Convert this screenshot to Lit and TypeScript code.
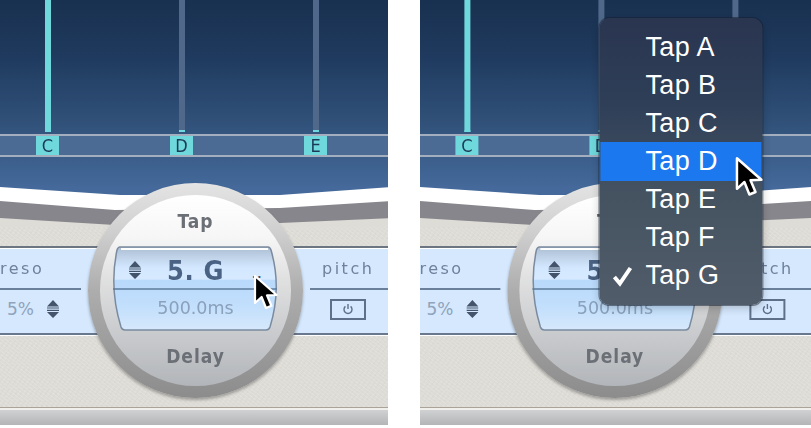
import { LitElement, html, css } from "lit";
import { customElement, property } from "lit/decorators.js";

const TAPS = [
  { id: "C", x: 36, on: true },
  { id: "D", x: 170, on: false },
  { id: "E", x: 304, on: false },
];
const MENU = ["A", "B", "C", "D", "E", "F", "G"];

const stepper = (cls: string) => html`<svg class=${cls} viewBox="0 0 12 18" width="12" height="18">
  <path d="M6 0 L12 6.4 H0 Z M0 7.4 H12 V8.6 H0 Z M0 9.8 H12 V11 H0 Z M0 12 H12 L6 18 Z" fill="#44546a"/>
</svg>`;

const arrow = (cls: string) => html`<svg class=${cls} viewBox="0 0 28 38">
  <path d="M3 2 L3 29 L9.6 23 L14 34 L19.4 31.8 L15 21.4 L24.6 21 Z" fill="#000" stroke="#fff" stroke-width="2.2" stroke-linejoin="round"/>
</svg>`;

@customElement("delay-panel")
class DelayPanel extends LitElement {
  @property({ type: Boolean, reflect: true }) menu = false;
  static styles = css`
    :host { display: block; position: relative; height: 425px; overflow: hidden; font-family: "DejaVu Sans", sans-serif; }
    .inner { position: relative; width: 392px; height: 425px; display: flex; flex-direction: column; }
    :host([menu]) .inner { transform: translateX(-0.6px); }
    .sky { height: 187px; flex: none; display: flex; flex-direction: column;
      background: linear-gradient(#193150 0%, #1f3a5e 30%, #33547d 70%, #44699a 100%); }
    .track { height: 134px; flex: none; position: relative; }
    .bar { position: absolute; top: 0; bottom: 2px; width: 6px; background: #50698a; }
    .bar::after { content: ""; position: absolute; left: 0; right: 0; bottom: 0; height: 2px; background: #6fd8dc; }
    .bar.on { background: #6fd8dc; }
    .band { height: 19px; flex: none; position: relative; background: #4b6b94;
      border-top: 2px solid #a3afbf; border-bottom: 2px solid #a3afbf; }
    .tag { position: absolute; top: 0; width: 23px; height: 19px; background: #6fd8dc; color: #1b3a58;
      font: 18px/19px "DejaVu Sans Condensed", "DejaVu Sans", sans-serif; text-align: center; filter: blur(.25px); }
    .wedge { display: block; flex: none; width: 392px; height: 40px; }
    .cream { background-color: #dedcd6;
      background-image: repeating-linear-gradient(37deg, rgba(255,255,255,.12) 0 1px, transparent 1px 3px),
        repeating-linear-gradient(-53deg, rgba(120,115,105,.035) 0 1px, transparent 1px 4px); }
    .upper { height: 19px; flex: none; }
    .strip { height: 85px; flex: none; display: flex; justify-content: space-between; background: #d5e8fe;
      border-top: 2px solid #6c7582; border-bottom: 2px solid #69788c; box-shadow: inset 0 1px #fff; }
    .lower { height: 71px; flex: none; border-top: 1px solid #fff; }
    .foot { height: 18px; flex: none; border-top: 1px solid #a9a399; box-sizing: border-box; padding-top: 2px; background: #f0efec; }
    .foot div { height: 15px; background: linear-gradient(#cfd1d3, #b3b5b7); }
    .cell { display: flex; flex-direction: column; color: #6f819c; }
    .cell.l { width: 81px; } .cell.r { width: 82px; }
    .name { height: 42px; flex: none; box-sizing: border-box; padding-top: 11px; font-size: 16px; line-height: 20px; letter-spacing: 2.5px; border-bottom: 2px solid #6a7f9a; filter: blur(.2px); }
    .l .name { text-align: right; padding-right: 37px; }
    .r .name { padding-left: 12px; }
    .val { flex: 1; display: flex; align-items: center; padding-bottom: 5px; }
    .l .val { padding-left: 7px; gap: 13px; font-size: 17px; color: #8fa3bb; }
    .pow { margin-left: 20px; width: 36px; height: 21px; box-sizing: border-box; border: 2px solid #5e7089; display: flex; align-items: center; justify-content: center; }

    .dial { position: absolute; left: 88px; top: 183px; width: 215px; height: 215px; border-radius: 50%; box-sizing: border-box; padding: 12px;
      background: linear-gradient(#e4e4e4 0%, #d0d0d0 22%, #adadad 50%, #8c8c8c 100%);
      box-shadow: 0 2px 3px rgba(60,60,60,.4); }
    .face { height: 191px; border-radius: 50%; display: flex; flex-direction: column; align-items: center;
      background: linear-gradient(#fff 0%, #f6f6f6 22%, #e2e2e2 42%, #c6c8cb 76%, #b2b5b9 100%); }
    .cap { height: 24px; flex: none; font: bold 19px/24px "DejaVu Sans Condensed", "DejaVu Sans", sans-serif; letter-spacing: 1px; color: #6b6f76; filter: blur(.35px); }
    .cap.t { margin-top: 14px; }
    .cap.b { margin-top: 13px; }
    .window { position: relative; flex: none; margin-top: 13px; width: 165px; height: 85px; display: flex; flex-direction: column; }
    .window > svg.bg { position: absolute; inset: 0; overflow: visible; }
    .row1 { position: relative; height: 43px; flex: none; display: grid; grid-template-columns: 54px 54px 1fr; align-items: center; }
    .row1 .step { margin-left: 16px; margin-top: 4px; }
    .num { font: bold 27px/30px "DejaVu Sans Condensed", "DejaVu Sans", sans-serif; letter-spacing: .6px; color: #4a6283; white-space: pre; margin-top: 7px; filter: blur(.3px); }
    .dots { margin-left: 31px; margin-top: 14px; color: #3f5068; font: bold 11px/10px "DejaVu Sans", sans-serif; letter-spacing: 1px; }
    .row2 { position: relative; flex: 1; text-align: center; font-size: 17.5px; line-height: 38px; color: #8aa0bb; filter: blur(.2px); }
    .cursor { position: absolute; left: 252px; top: 274px; width: 28px; height: 38px; }
    .menu { position: absolute; left: 180px; top: 18px; width: 163px; height: 287px; box-sizing: border-box; padding: 10px 0 0; border-radius: 10px;
      background: linear-gradient(#2a3550 0%, #2f3f58 30%, #455361 62%, #515c6a 100%);
      box-shadow: 0 0 0 1px rgba(20,30,45,.5), 0 3px 8px rgba(0,0,0,.2); color: #fff;
      font: 27px/39px "Liberation Sans", sans-serif; }
    .item { height: 38px; padding-left: 46px; position: relative; letter-spacing: .4px; }
    .item.hot { background: #1c78ef; margin: 0 1px -1px; height: 39px; padding-left: 45px; }
    .check { position: absolute; left: 12px; top: 9px; }
    .cursor.m { left: 314px; top: 156px; width: 32px; height: 43px; }
  `;
  render() {
    return html`<div class="inner">
      <div class="sky">
        <div class="track">${TAPS.map((t) => html`<div class="bar ${t.on ? "on" : ""}" style="left:${t.x + 9}px"></div>`)}</div>
        <div class="band">${TAPS.map((t) => html`<div class="tag" style="left:${t.x}px">${t.id}</div>`)}</div>
      </div>
      <svg class="wedge" viewBox="0 0 392 40" preserveAspectRatio="none">
        <rect width="392" height="40" fill="#44699a"/>
        <path d="M0 0 L120 8 L280 8 L392 0 V40 H0 Z" fill="#fff"/>
        <path d="M0 14 L115 23 L280 21 L392 14 V40 H0 Z" fill="#87868c"/>
        <path d="M0 31 L115 38 L280 36 L392 31 V40 H0 Z" fill="#dedcd6"/>
      </svg>
      <div class="upper cream"></div>
      <div class="strip">
        <div class="cell l"><div class="name">reso</div><div class="val"><span>5%</span>${stepper("")}</div></div>
        <div class="cell r"><div class="name">pitch</div><div class="val">
          <div class="pow"><svg viewBox="0 0 12 12" width="12" height="12"><path d="M3.4 3.4 A4 4 0 1 0 8.6 3.4 M6 1 V6" fill="none" stroke="#5e7089" stroke-width="1.4"/></svg></div>
        </div></div>
      </div>
      <div class="lower cream"></div>
      <div class="foot"><div></div></div>

      <div class="dial"><div class="face">
        <div class="cap t">Tap</div>
        <div class="window">
          <svg class="bg" viewBox="0 0 165 85" width="165" height="85">
            <defs>
              <linearGradient id="w" x1="0" y1="0" x2="0" y2="1">
                <stop offset="0" stop-color="#adbed2"/><stop offset=".25" stop-color="#d3e8ff"/>
                <stop offset=".39" stop-color="#d6e9ff"/><stop offset=".395" stop-color="#b9d9fb"/>
                <stop offset=".72" stop-color="#c2dffc"/><stop offset="1" stop-color="#d6e8fb"/>
              </linearGradient>
            </defs>
            <path d="M7 1 H155 Q157 1 158 4 Q169 42 157 81 Q156 84 153 84 H12 Q9 84 8 81 Q-4 42 4 4 Q5 1 7 1 Z" fill="url(#w)" stroke="#7a8ba0" stroke-width="1.5"/>
            <path d="M8 3 H155" stroke="#fff" stroke-width="2"/>
            <path d="M0 43 H164" stroke="#5d7a9a" stroke-width="1.6"/>
          </svg>
          <div class="row1">${stepper("step")}<span class="num">5. G</span><span class="dots">..</span></div>
          <div class="row2">500.0ms</div>
        </div>
        <div class="cap b">Delay</div>
      </div></div>

      ${this.menu ? html`
        <div class="menu">
          ${MENU.map((m) => html`<div class="item ${m === "D" ? "hot" : ""}">
            ${m === "G" ? html`<svg class="check" viewBox="0 0 22 22" width="22" height="22"><path d="M3 12 L8.5 18.5 L19 3" fill="none" stroke="#fff" stroke-width="4"/></svg>` : ""}
            Tap ${m}</div>`)}
        </div>
        ${arrow("cursor m")}` : arrow("cursor")}
    </div>`;
  }
}

@customElement("app-root")
export class AppRoot extends LitElement {
  static styles = css`
    :host { display: block; width: 811px; height: 428px; background: #fff; }
    .wrap { display: flex; gap: 32px; }
    .a { width: 388px; flex: none; }
    .b { flex: 1; min-width: 0; }
  `;
  render() {
    return html`<div class="wrap">
      <delay-panel class="a"></delay-panel>
      <delay-panel class="b" menu></delay-panel>
    </div>`;
  }
}
